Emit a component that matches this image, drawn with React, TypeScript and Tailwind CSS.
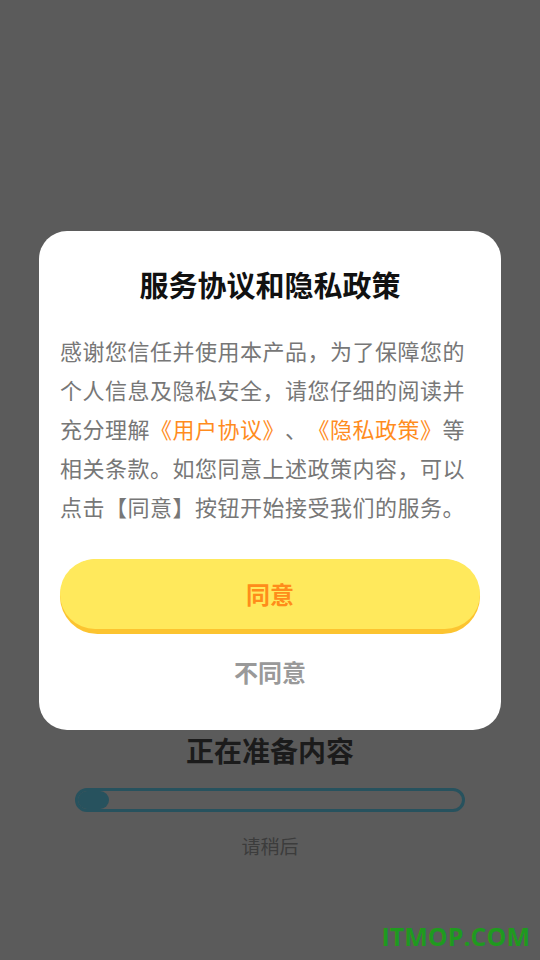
export default function App() {
  const font = { fontFamily: '"Noto Sans CJK SC", "Noto Sans", sans-serif' }

  return (
    <div className="relative h-[960px] w-[540px] overflow-hidden bg-[#5b5b5b] [text-spacing-trim:space-all]" style={font}>
      {/* dimmed page underneath */}
      <div className="flex flex-col items-center pt-[730px]">
        <h2 className="text-[28px] leading-[40px] font-bold text-[#1b1b1b]">正在准备内容</h2>
        <div className="mt-[18px] h-[24px] w-[390px] rounded-full border-[3px] border-[#27525e]">
          <div className="h-full w-[31px] rounded-full bg-[#27525e]" />
        </div>
        <p className="mt-[21px] text-[19px] leading-[26px] text-[#3c3c3c]">请稍后</p>
      </div>

      {/* watermark */}
      <div
        className="absolute right-[10px] bottom-[9px] text-[25px] leading-[30px] font-bold text-[#1f9a1f]"
        style={{ fontFamily: '"Open Sans", "Liberation Sans", sans-serif' }}
      >
        ITMOP.COM
      </div>

      {/* dialog */}
      <div className="absolute top-[231px] left-[39px] w-[462px] rounded-[28px] bg-white px-[21px] pt-[33px] pb-[38px]">
        <h1 className="text-center text-[29px] leading-[40px] font-bold text-[#111]">服务协议和隐私政策</h1>
        <p className="mt-[27px] text-[22px] leading-[39px] tracking-[0.5px] text-[#777]">
          感谢您信任并使用本产品，为了保障您的个人信息及隐私安全，请您仔细的阅读并充分理解
          <span className="text-[#ff8c1e]">《用户协议》</span>、
          <span className="text-[#ff8c1e]">《隐私政策》</span>
          等相关条款。如您同意上述政策内容，可以点击【同意】按钮开始接受我们的服务。
        </p>
        <button className="mt-[33px] flex h-[75px] w-full items-start rounded-full bg-[#fcc430]">
          <span className="flex h-[70px] w-full items-center justify-center rounded-full bg-[#ffe95c] text-[24px] font-bold text-[#ff8c1a]">
            同意
          </span>
        </button>
        <div className="mt-[18px] text-center text-[24px] leading-[40px] font-bold text-[#999]">不同意</div>
      </div>
    </div>
  )
}
